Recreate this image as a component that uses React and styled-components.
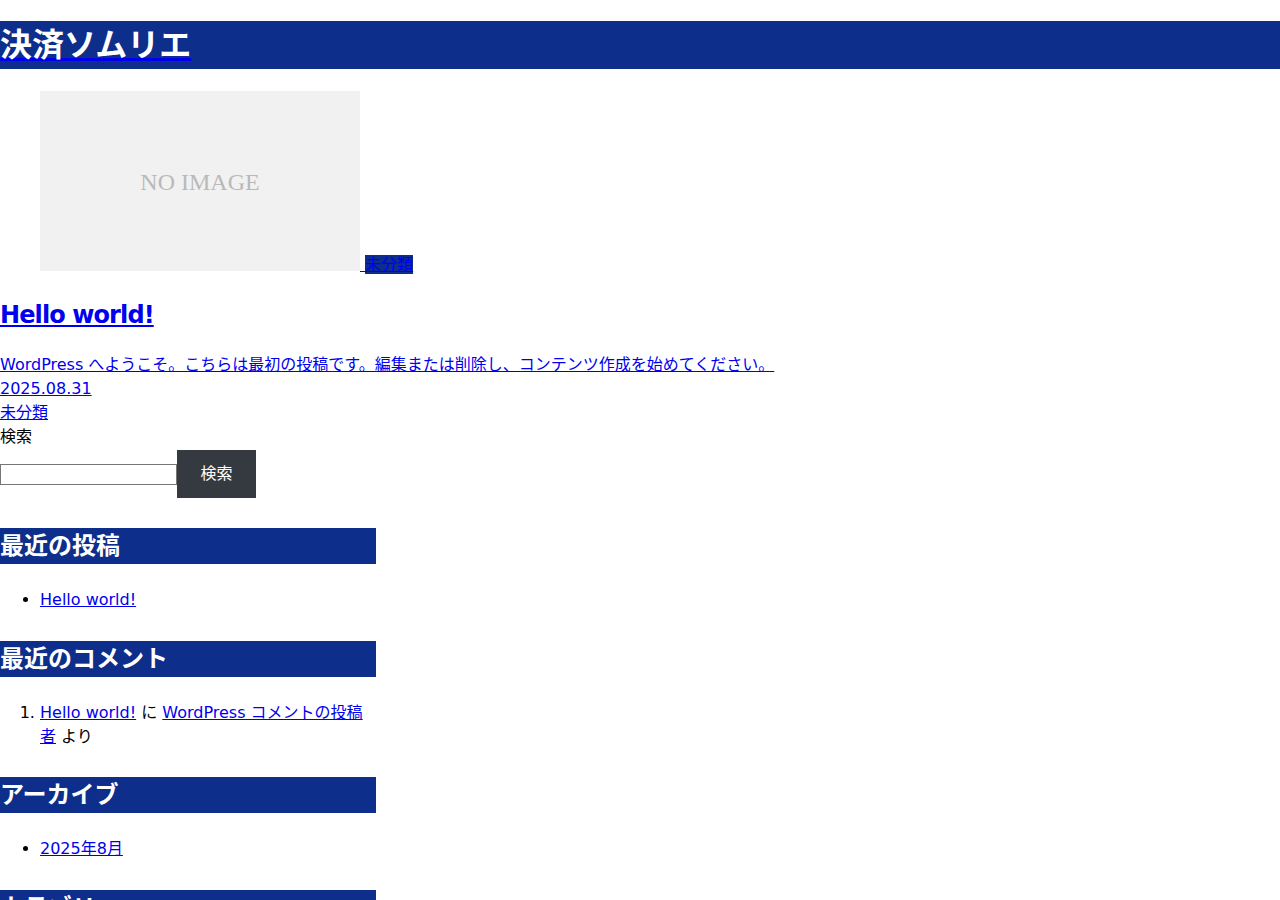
import React from 'react'
import styled, { createGlobalStyle } from 'styled-components'

const navy = '#0d2e8a'

const GlobalStyle = createGlobalStyle`
  body {
    margin: 0;
    font-family: "DejaVu Sans", "Noto Sans CJK JP", sans-serif;
    font-size: 16px;
    line-height: 1.5;
    color: #000;
    background: #fff;
  }
  a {
    color: #0000ee;
  }
`

const SiteTitle = styled.h1`
  margin: 21px 0;
  background: ${navy};
  font-size: 32px;
  line-height: 48px;
  font-weight: bold;
  a {
    color: #fff;
    text-decoration-color: #0000ee;
  }
`

const Thumb = styled.figure`
  margin: 22px 40px 16px;
`

const NoImage = styled.span`
  display: inline-block;
  width: 320px;
  height: 180px;
  vertical-align: bottom;
  background: #f1f1f1;
  color: #b9b9b9;
  font-family: "Liberation Serif", serif;
  font-size: 24px;
  line-height: 182px;
  text-align: center;
  text-decoration: none;
  margin-bottom: 6px;
`

const CatBadge = styled.span`
  background: ${navy};
  color: #0000ee;
`

const PostTitle = styled.h2`
  margin: 20px 0;
  font-size: 24px;
  line-height: 36px;
  letter-spacing: -0.9px;
`

const MetaLink = styled.a`
  display: block;
  width: fit-content;
`

const Sidebar = styled.aside`
  width: 376px;
`

const SearchForm = styled.form`
  padding-bottom: 1px;
`

const SearchRow = styled.div`
  display: flex;
  align-items: center;
  padding-top: 1px;
`

const SearchInput = styled.input`
  box-sizing: border-box;
  width: 177px;
  height: 21px;
  margin: 0;
  border: 1px solid #767676;
  padding: 1px 2px;
`

const SearchButton = styled.button`
  border: 0;
  margin: 0;
  background: #343a40;
  color: #fff;
  font: inherit;
  line-height: 24px;
  padding: 12px 23.5px;
`

const Widget = styled.section`
  margin-top: 29px;
`

const WidgetTitle = styled.h2`
  margin: 0 0 24px;
  background: ${navy};
  color: #fff;
  font-size: 24px;
  line-height: 36px;
`

const List = styled.ul`
  margin: 0;
  padding-left: 40px;
`

const Ordered = styled.ol`
  margin: 0;
  padding-left: 40px;
  line-height: 23.5px;
`

export default function App() {
  return (
    <>
      <GlobalStyle />
      <SiteTitle>
        <a href="#">決済ソムリエ</a>
      </SiteTitle>
      <main>
        <Thumb>
          <a href="#">
            <NoImage>NO IMAGE</NoImage> <CatBadge>未分類</CatBadge>
          </a>
        </Thumb>
        <PostTitle>
          <a href="#">Hello world!</a>
        </PostTitle>
        <MetaLink href="#">WordPress へようこそ。こちらは最初の投稿です。編集または削除し、コンテンツ作成を始めてください。 </MetaLink>
        <MetaLink href="#">2025.08.31</MetaLink>
        <MetaLink href="#">未分類</MetaLink>
      </main>
      <Sidebar>
        <SearchForm>
          <label htmlFor="s">検索</label>
          <SearchRow>
            <SearchInput id="s" type="text" />
            <SearchButton type="button">検索</SearchButton>
          </SearchRow>
        </SearchForm>
        <Widget>
          <WidgetTitle>最近の投稿</WidgetTitle>
          <List>
            <li><a href="#">Hello world!</a></li>
          </List>
        </Widget>
        <Widget>
          <WidgetTitle>最近のコメント</WidgetTitle>
          <Ordered>
            <li>
              <a href="#">Hello world!</a> に <a href="#">WordPress コメントの投稿者</a> より
            </li>
          </Ordered>
        </Widget>
        <Widget>
          <WidgetTitle>アーカイブ</WidgetTitle>
          <List>
            <li><a href="#">2025年8月</a></li>
          </List>
        </Widget>
        <Widget>
          <WidgetTitle>カテゴリー</WidgetTitle>
          <List>
            <li><a href="#">未分類</a></li>
          </List>
        </Widget>
      </Sidebar>
    </>
  )
}
